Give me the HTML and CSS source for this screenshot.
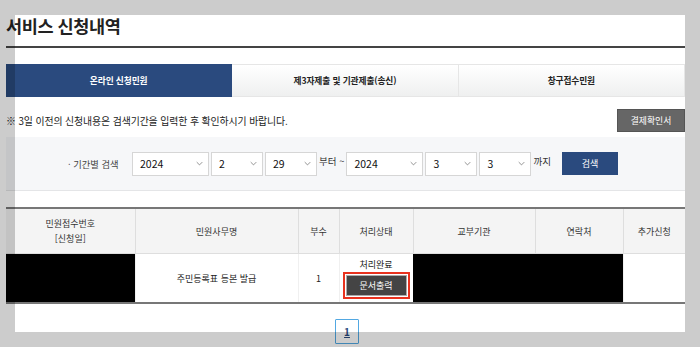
FILE: index.html
```html
<!DOCTYPE html>
<html lang="ko">
<head>
    <meta charset="UTF-8">
    <meta name="viewport" content="width=device-width, initial-scale=1.0">
    <title>서비스 신청내역</title>
    <link rel="stylesheet" href="styles.css">
</head>
<body>
    <div class="page">
        <h1>서비스 신청내역</h1>

        <div class="tabs">
            <div class="tab active">온라인 신청민원</div>
            <div class="tab">제3자제출 및 기관제출(송신)</div>
            <div class="tab">창구접수민원</div>
        </div>

        <div class="notice-row">
            <p class="notice">※ 3일 이전의 신청내용은 검색기간을 입력한 후 확인하시기 바랍니다.</p>
            <button class="btn-gray">결제확인서</button>
        </div>

        <div class="search-box">
            <span class="label">· 기간별 검색</span>
            <div class="select wide"><span>2024</span><svg viewBox="0 0 10 6"><path d="M1 1l4 4 4-4"/></svg></div>
            <div class="select"><span>2</span><svg viewBox="0 0 10 6"><path d="M1 1l4 4 4-4"/></svg></div>
            <div class="select"><span>29</span><svg viewBox="0 0 10 6"><path d="M1 1l4 4 4-4"/></svg></div>
            <span class="word">부터 ~</span>
            <div class="select wide"><span>2024</span><svg viewBox="0 0 10 6"><path d="M1 1l4 4 4-4"/></svg></div>
            <div class="select"><span>3</span><svg viewBox="0 0 10 6"><path d="M1 1l4 4 4-4"/></svg></div>
            <div class="select"><span>3</span><svg viewBox="0 0 10 6"><path d="M1 1l4 4 4-4"/></svg></div>
            <span class="word">까지</span>
            <button class="btn-blue">검색</button>
        </div>

        <table class="list">
            <colgroup>
                <col style="width:129px">
                <col style="width:163px">
                <col style="width:41px">
                <col style="width:74px">
                <col style="width:122px">
                <col style="width:88px">
                <col style="width:62px">
            </colgroup>
            <thead>
                <tr>
                    <th>민원접수번호<br>[신청일]</th>
                    <th>민원사무명</th>
                    <th>부수</th>
                    <th>처리상태</th>
                    <th>교부기관</th>
                    <th>연락처</th>
                    <th>추가신청</th>
                </tr>
            </thead>
            <tbody>
                <tr>
                    <td class="hidden"></td>
                    <td>주민등록표 등본 발급</td>
                    <td>1</td>
                    <td class="status">
                        <div>처리완료</div>
                        <div class="mark"><button class="btn-dark">문서출력</button></div>
                    </td>
                    <td class="hidden"></td>
                    <td class="hidden"></td>
                    <td></td>
                </tr>
            </tbody>
        </table>

        <div class="paging">
            <a class="page-num">1</a>
        </div>
    </div>

    <div class="spotlight"></div>
</body>
</html>
```

FILE: styles.css
```css
body {
    margin: 0;
    background: #ffffff;
    font-family: "Noto Sans CJK KR", "Noto Sans", sans-serif;
    color: #333;
}
.page {
    margin-left: 6px;
    width: 679px;
}
h1 {
    margin: 0;
    padding: 13px 0 7px;
    font-size: 17.5px;
    line-height: 26px;
    letter-spacing: -0.4px;
    color: #222;
    border-bottom: 2px solid #444;
}
.tabs {
    display: flex;
    margin-top: 16px;
    height: 33px;
}
.tab {
    flex: 1;
    display: flex;
    align-items: center;
    justify-content: center;
    font-size: 8.7px;
    font-weight: bold;
    letter-spacing: -0.1px;
    color: #222;
    background: linear-gradient(#ffffff, #eff0f0);
    border: 1px solid #e6e6e6;
    border-left: none;
}
.tab.active {
    background: #2a4a7e;
    border-color: #2a4a7e;
    color: #fff;
}
.notice-row {
    display: flex;
    align-items: center;
    justify-content: space-between;
    margin-top: 12px;
    height: 23px;
}
.notice {
    margin: 0;
    font-size: 9.9px;
    letter-spacing: -0.1px;
    color: #222;
}
.btn-gray {
    width: 68px;
    height: 23px;
    padding: 0;
    border: 1px solid #555;
    background: #666;
    color: #fff;
    font-family: inherit;
    font-size: 8.8px;
}
.search-box {
    margin-top: 5px;
    height: 53px;
    background: #f6f7f9;
    border-bottom: 1px solid #e4e5e7;
    display: flex;
    align-items: center;
    gap: 2px;
    padding-left: 62px;
}
.label {
    width: 62px;
    font-size: 9.3px;
    color: #444;
}
.select {
    width: 52px;
    height: 24px;
    background: #fff;
    border: 1px solid #d6d6d6;
    display: flex;
    align-items: center;
    justify-content: space-between;
    padding: 0 5px 0 7px;
    box-sizing: border-box;
}
.select.wide {
    width: 77px;
}
.select span {
    font-size: 10.5px;
    color: #111;
}
.select svg {
    width: 7px;
    height: 5px;
    fill: none;
    stroke: #666;
    stroke-width: 1;
}
.word {
    font-size: 9.5px;
    color: #333;
    margin-top: -6px;
}
.btn-blue {
    margin-left: 9px;
    width: 56px;
    height: 23px;
    padding: 0;
    border: none;
    background: #2a4a7e;
    color: #fff;
    font-family: inherit;
    font-size: 9px;
}
.list {
    margin-top: 16px;
    width: 679px;
    table-layout: fixed;
    border-collapse: collapse;
    border-top: 2px solid #777;
    border-bottom: 2px solid #777;
}
.list th {
    height: 42px;
    background: #f4f4f4;
    font-size: 9px;
    font-weight: normal;
    color: #333;
    line-height: 15px;
    border-left: 1px solid #dedede;
    border-bottom: 1px solid #dedede;
}
.list th:first-child, .list td:first-child {
    border-left: none;
}
.list td {
    height: 48px;
    padding: 0;
    text-align: center;
    font-size: 9px;
    color: #222;
    border-left: 1px solid #f0f0f0;
}
.list td.hidden {
    background: #000;
    border-left-color: #000;
}
.status {
    line-height: 13px;
}
.mark {
    display: inline-block;
    border: 2px solid #e8321e;
    padding: 1px;
    margin-top: 1px;
}
.btn-dark {
    display: block;
    width: 61px;
    height: 21px;
    padding: 0;
    border: 1px solid #aaa;
    background: #444;
    color: #fff;
    font-family: inherit;
    font-size: 9px;
}
.paging {
    display: flex;
    justify-content: center;
    margin-top: 15px;
}
.page-num {
    width: 22px;
    height: 23px;
    display: flex;
    align-items: center;
    justify-content: center;
    border: 1px solid #52a8e2;
    border-radius: 1px;
    font-size: 10px;
    font-weight: bold;
    color: #2a4a7e;
    text-decoration: underline;
    margin-left: 3px;
}
.spotlight {
    position: fixed;
    left: 15px;
    top: 15px;
    width: 670px;
    height: 317px;
    box-shadow: 0 0 0 1000px rgba(0, 0, 0, 0.2);
    pointer-events: none;
}
```
